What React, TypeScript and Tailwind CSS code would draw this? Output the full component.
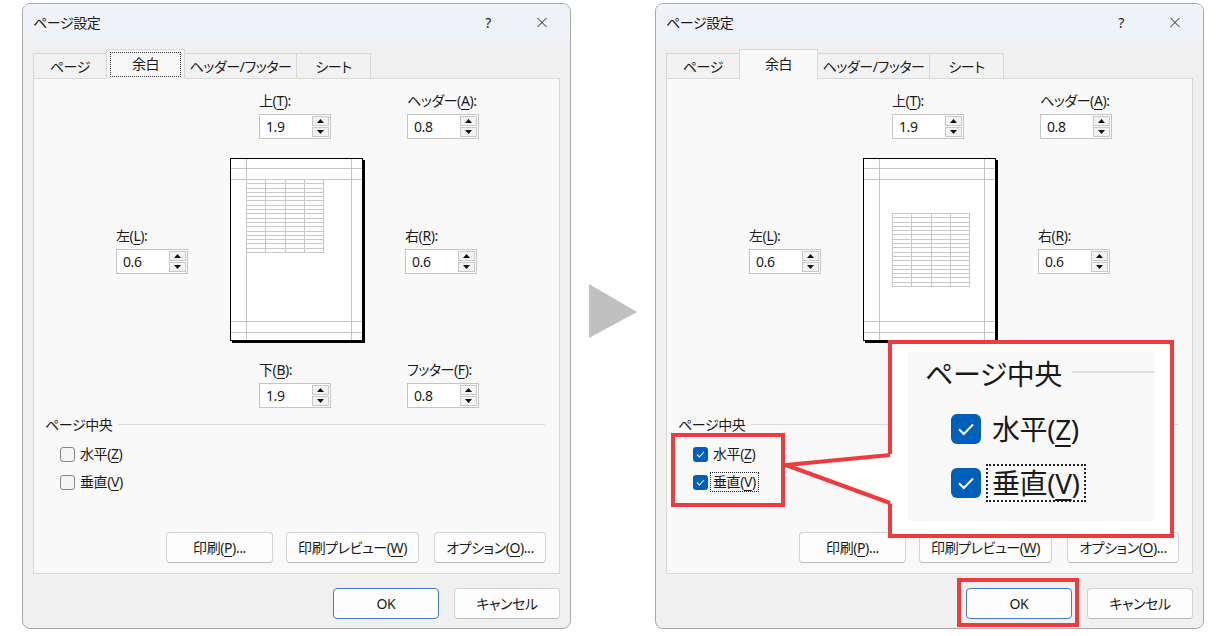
import React from "react";

type Kind = "before" | "after";

// アクセスキーの下線
function Acc({ k, big }: { k: string; big?: boolean }) {
  return (
    <span className={big ? "underline decoration-2 underline-offset-[5px]" : "underline decoration-1 underline-offset-[3px]"}>
      {k}
    </span>
  );
}

function SpinBtn({ up }: { up?: boolean }) {
  return (
    <div className="flex flex-1 items-center justify-center border border-[#c9c9c9] bg-[#f3f3f3]">
      <svg width="7" height="4" viewBox="0 0 7 4">
        <path d={up ? "M0 4L3.5 0L7 4Z" : "M0 0L7 0L3.5 4Z"} fill="#111" />
      </svg>
    </div>
  );
}

function Spin({ label, k, value }: { label: string; k: string; value: string }) {
  return (
    <div className="flex w-[72px] shrink-0 flex-col">
      <div className="h-[16px] whitespace-nowrap leading-[16px]">
        {label}(<Acc k={k} />):
      </div>
      <div className="mt-[5px] flex h-[25px] border border-[#c5c5c5] bg-white">
        <div className="flex-1 pl-[6px] leading-[23px]">{value}</div>
        <div className="flex w-[18px] flex-col gap-px py-px pr-px">
          <SpinBtn up />
          <SpinBtn />
        </div>
      </div>
    </div>
  );
}

// 余白プレビュー
function Preview({ centered }: { centered: boolean }) {
  const tx = centered ? 29 : 16;
  const ty = centered ? 55 : 21;
  const tw = 77;
  const th = 73;
  const rows = 17;
  const cols = 4;
  return (
    <svg width="135" height="185" viewBox="0 0 135 185" className="shrink-0">
      <rect x="2" y="2" width="133" height="183" fill="#000" />
      <rect x="0.5" y="0.5" width="132" height="182" fill="#fff" stroke="#000" />
      <g stroke="#c4c4c4" strokeWidth="1">
        <line x1="16.5" y1="1" x2="16.5" y2="182" />
        <line x1="121.5" y1="1" x2="121.5" y2="182" />
        <line x1="1" y1="10.5" x2="132" y2="10.5" />
        <line x1="1" y1="21.5" x2="132" y2="21.5" />
        <line x1="1" y1="163.5" x2="132" y2="163.5" />
        <line x1="1" y1="174.5" x2="132" y2="174.5" />
      </g>
      <g stroke="#c8c8c8" strokeWidth="1">
        {Array.from({ length: rows + 1 }).map((_, i) => {
          const y = Math.round(ty + (th * i) / rows) + 0.5;
          return <line key={"r" + i} x1={tx} y1={y} x2={tx + tw} y2={y} />;
        })}
        {Array.from({ length: cols + 1 }).map((_, i) => {
          const x = Math.round(tx + (tw * i) / cols) + 0.5;
          return <line key={"c" + i} x1={x} y1={ty} x2={x} y2={ty + th + 1} />;
        })}
      </g>
    </svg>
  );
}

function Check({ on }: { on: boolean }) {
  if (on) {
    return (
      <div className="flex h-[15px] w-[15px] shrink-0 items-center justify-center rounded-[3px] bg-[#005fb8]">
        <svg width="9" height="7" viewBox="0 0 9 7">
          <path d="M1 3.6L3.4 6L8 1" stroke="#fff" strokeWidth="1.1" fill="none" />
        </svg>
      </div>
    );
  }
  return <div className="h-[15px] w-[15px] shrink-0 rounded-[3px] border border-[#878787] bg-[#f5f5f5]" />;
}

function Btn({ w, def, children }: { w: string; def?: boolean; children: React.ReactNode }) {
  return (
    <div
      className={`flex h-[31px] shrink-0 items-center justify-center whitespace-nowrap rounded-[4px] border bg-[#fdfdfd] ${w} ${
        def ? "border-[#3f7fc1]" : "border-[#d3d3d3] border-b-[#bdbdbd]"
      }`}
    >
      {children}
    </div>
  );
}

const tabs = [
  { t: "ページ", w: "w-[74px]" },
  { t: "余白", w: "w-[79px]", sel: true },
  { t: "ヘッダー/フッター", w: "w-[113px]" },
  { t: "シート", w: "w-[75px]" },
];

function Dialog({ kind }: { kind: Kind }) {
  const after = kind === "after";
  return (
    <div className="flex h-[626px] w-[549px] shrink-0 flex-col overflow-hidden rounded-[8px] border border-[#a9a9a9] bg-[#f0f0f0]">
      {/* タイトルバー */}
      <div className="flex h-[36px] shrink-0 items-center bg-[#eff3f8] pl-[10px]">
        <span>ページ設定</span>
        <span className="ml-auto w-[14px] text-center">?</span>
        <div className="ml-[42px] mr-[23px] flex h-[10px] w-[10px] items-center justify-center">
          <svg width="11" height="11" viewBox="0 0 11 11">
            <path d="M0.5 0.5L10.5 10.5M10.5 0.5L0.5 10.5" stroke="#222" strokeWidth="1.1" />
          </svg>
        </div>
      </div>

      {/* タブ */}
      <div className="flex h-[38px] shrink-0 items-end pl-[11px]">
        {tabs.map((tab, i) => (
          <div
            key={i}
            className={`relative -ml-px flex items-center justify-center border border-b-0 border-[#d9d9d9] whitespace-nowrap ${tab.w} ${
              tab.sel ? "z-10 -mb-px h-[30px] bg-[#f9f9f9] pb-[2px]" : "h-[25px] bg-[#f2f2f2]"
            }`}
          >
            {tab.t}
            {tab.sel && !after && <div className="absolute inset-x-[3px] bottom-[2px] top-[2px] border border-dotted border-[#333]" />}
          </div>
        ))}
      </div>

      {/* パネル */}
      <div className="mx-[10px] flex h-[496px] shrink-0 flex-col border border-[#d9d9d9] bg-[#f9f9f9]">
        <div className="flex pl-[225px] pt-[14px]">
          <Spin label="上" k="T" value="1.9" />
          <div className="ml-[76px]">
            <Spin label="ヘッダー" k="A" value="0.8" />
          </div>
        </div>

        <div className="mt-[19px] flex items-center pl-[82px]">
          <Spin label="左" k="L" value="0.6" />
          <div className="ml-[42px]">
            <Preview centered={after} />
          </div>
          <div className="ml-[40px]">
            <Spin label="右" k="R" value="0.6" />
          </div>
        </div>

        <div className="mt-[19px] flex pl-[225px]">
          <Spin label="下" k="B" value="1.9" />
          {/* 右側では拡大枠の下に隠れる */}
          <div className={`ml-[76px] ${after ? "invisible" : ""}`}>
            <Spin label="フッター" k="F" value="0.8" />
          </div>
        </div>

        {/* ページ中央 */}
        <div className="mt-[9px] flex h-[16px] items-center pl-[11px] pr-[14px]">
          <span className="leading-[16px]">ページ中央</span>
          <div className="ml-[6px] mt-[-2px] h-px flex-1 bg-[#dcdcdc]" />
        </div>
        <div className="mt-[11px] flex h-[20px] items-center pl-[26px]">
          <Check on={after} />
          <span className="ml-[2px] border border-transparent px-[2px] leading-[18px]">
            水平(<Acc k="Z" />)
          </span>
        </div>
        <div className="mt-[8px] flex h-[20px] items-center pl-[26px]">
          <Check on={after} />
          <span className={`ml-[2px] border px-[2px] leading-[18px] ${after ? "border-dotted border-[#222]" : "border-transparent"}`}>
            垂直(<Acc k="V" />)
          </span>
        </div>

        <div className="mb-[10px] mt-auto flex justify-end pr-[13px]">
          <Btn w="w-[107px]">
            印刷(<Acc k="P" />)...
          </Btn>
          <div className="ml-[13px]">
            <Btn w="w-[133px]">
              印刷プレビュー(<Acc k="W" />)
            </Btn>
          </div>
          <div className="ml-[15px]">
            <Btn w="w-[112px]">
              オプション(<Acc k="O" />)...
            </Btn>
          </div>
        </div>
      </div>

      {/* OK / キャンセル */}
      <div className="flex justify-end gap-[15px] pr-[10px] pt-[14px]">
        <Btn w="w-[106px]" def>
          OK
        </Btn>
        <Btn w="w-[106px]">キャンセル</Btn>
      </div>
    </div>
  );
}

function BigCheck() {
  return (
    <div className="flex h-[30px] w-[30px] shrink-0 items-center justify-center rounded-[6px] bg-[#005fb8]">
      <svg width="18" height="14" viewBox="0 0 18 14">
        <path d="M2 7.2L6.8 12L16 2.5" stroke="#fff" strokeWidth="2" fill="none" />
      </svg>
    </div>
  );
}

export default function App() {
  return (
    <div className="relative h-[636px] w-[1221px] overflow-hidden bg-white text-[14px] tracking-[-0.03em] text-[#1a1a1a] font-['Noto_Sans','Noto_Sans_CJK_JP',sans-serif] [font-feature-settings:'palt']">
      <div className="flex items-start pl-[22px] pt-[3px]">
        <Dialog kind="before" />
        <div className="w-[84px] shrink-0">
          <svg className="ml-[18px] mt-[281px]" width="48" height="54" viewBox="0 0 48 54">
            <polygon points="0,0 0,54 48,28" fill="#c0c0c0" />
          </svg>
        </div>
        <Dialog kind="after" />
      </div>

      {/* 強調枠 */}
      <div className="absolute left-[671px] top-[433px] h-[74px] w-[114px] border-4 border-[#ef3b3b]" />

      <div className="absolute left-[888px] top-[340px] flex h-[198px] w-[286px] flex-col border-4 border-[#ef3b3b] bg-white px-[16px] pb-[13px] pt-[8px]">
        <div className="flex flex-1 flex-col bg-[#f9f9f9] text-[28px]">
          <div className="mt-[6px] flex h-[32px] items-center pl-[17px]">
            <span className="whitespace-nowrap leading-[32px]">ページ中央</span>
            <div className="ml-[10px] mt-[-4px] h-[2px] flex-1 bg-[#dedede]" />
          </div>
          <div className="mt-[19px] flex h-[40px] items-center pl-[43px]">
            <BigCheck />
            <span className="ml-[5px] whitespace-nowrap border-2 border-transparent px-[4px] leading-[34px]">
              水平(<Acc k="Z" big />)
            </span>
          </div>
          <div className="mt-[14px] flex h-[40px] items-center pl-[43px]">
            <BigCheck />
            <span className="ml-[5px] whitespace-nowrap border-2 border-dotted border-[#222] px-[4px] leading-[34px]">
              垂直(<Acc k="V" big />)
            </span>
          </div>
        </div>
      </div>

      <svg className="absolute left-[780px] top-[440px]" width="116" height="70" viewBox="0 0 116 70">
        <polygon points="6,25 112,14 112,64" fill="#fff" />
        <polyline points="110,15 6,25 110,63" fill="none" stroke="#ef3b3b" strokeWidth="4" strokeLinejoin="round" />
      </svg>

      <div className="absolute left-[957px] top-[578px] h-[49px] w-[122px] border-4 border-[#ef3b3b]" />
    </div>
  );
}
